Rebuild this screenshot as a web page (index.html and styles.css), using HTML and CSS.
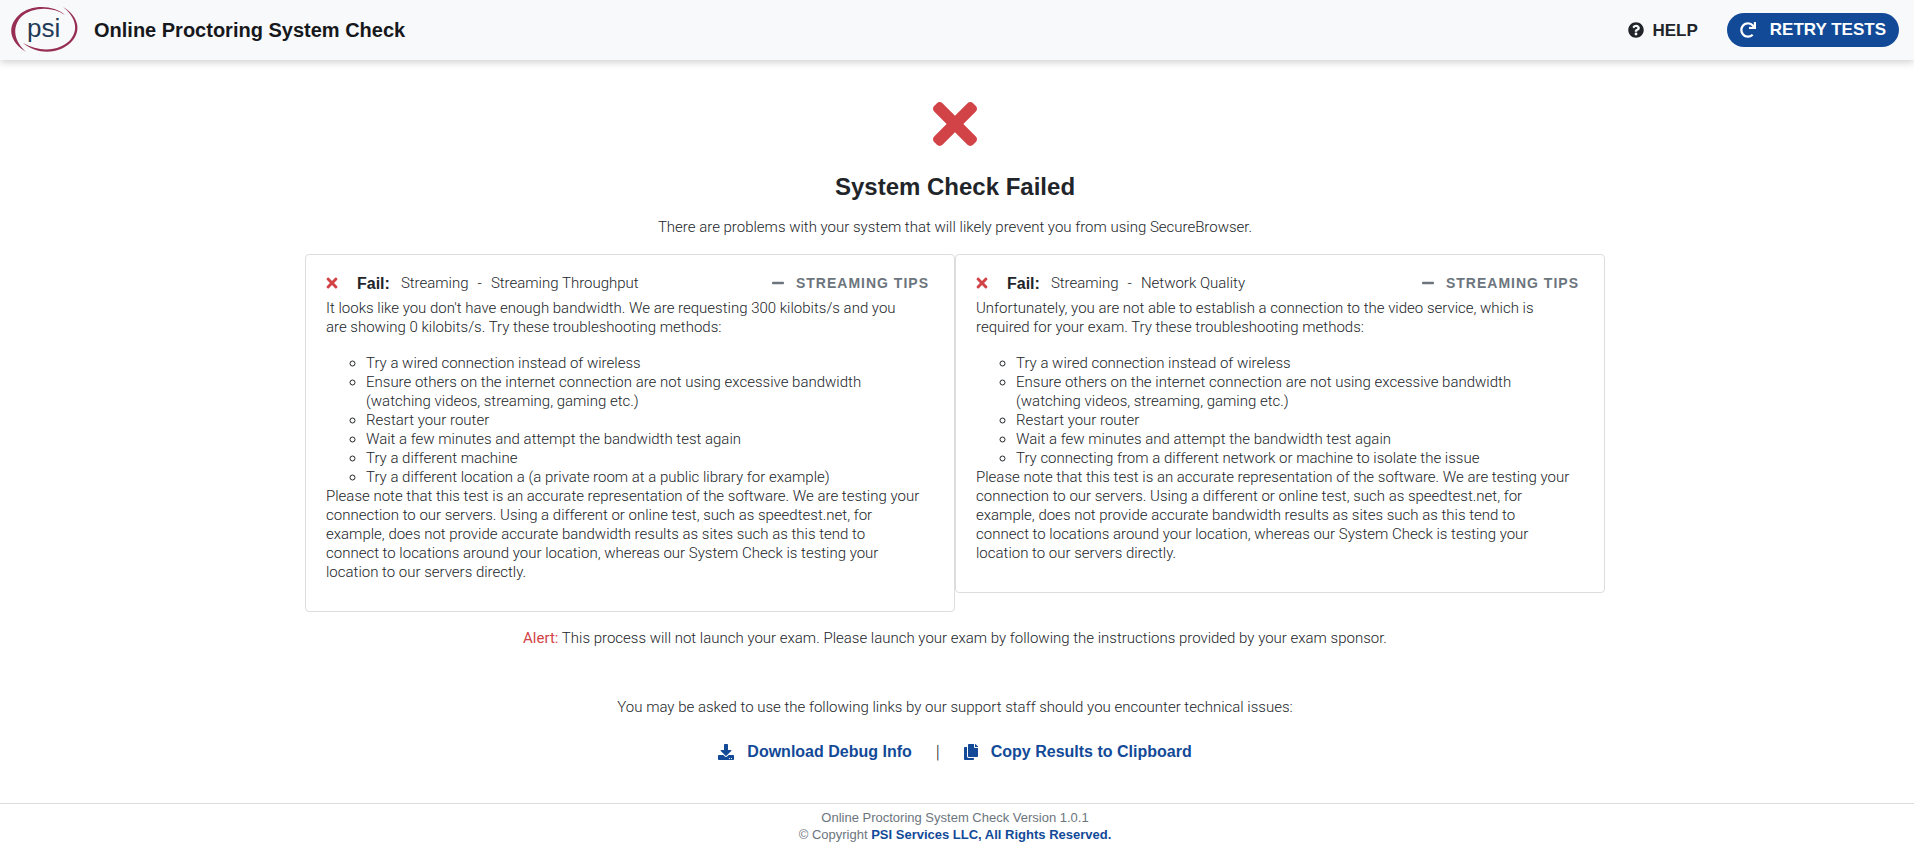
FILE: index.html
```html
<!DOCTYPE html>
<html lang="en">
<head>
<meta charset="utf-8">
<title>Online Proctoring System Check</title>
<link rel="stylesheet" href="styles.css">
</head>
<body>
<svg class="sprite" aria-hidden="true">
  <symbol id="times" viewBox="0 0 352 512"><path d="M242.720 256l100.070-100.070c12.280-12.280 12.280-32.190 0-44.480l-22.240-22.240c-12.280-12.280-32.190-12.280-44.480 0L176 189.280 75.930 89.210c-12.280-12.280-32.190-12.280-44.480 0L9.210 111.450c-12.280 12.280-12.280 32.190 0 44.480L109.280 256 9.210 356.070c-12.280 12.280-12.280 32.190 0 44.480l22.240 22.240c12.280 12.280 32.200 12.280 44.480 0L176 322.720l100.070 100.070c12.280 12.280 32.200 12.280 44.480 0l22.240-22.240c12.280-12.280 12.280-32.190 0-44.480L242.720 256z"/></symbol>
  <symbol id="minus" viewBox="0 0 448 512"><path d="M416 208H32c-17.670 0-32 14.330-32 32v32c0 17.670 14.330 32 32 32h384c17.670 0 32-14.330 32-32v-32c0-17.670-14.330-32-32-32z"/></symbol>
</svg>

<header class="topbar">
  <svg class="logo" viewBox="0 0 68 46" role="img" aria-label="psi">
    <path class="logo-ring" d="M54 8C43-2 20-3 8 8C-5 20-1 35 15 45C4 35 0 21 10 10C21 0 41-1 54 8Z"/>
    <path class="logo-ring" d="M52 0C66 8 71 22 62 33C51 47 27 49 12 36C29 46 50 44 60 32C68 22 64 9 52 0Z"/>
    <text class="logo-text" x="16" y="30">psi</text>
  </svg>
  <h1 class="title">Online Proctoring System Check</h1>
  <a class="help" href="#help">
    <svg class="icon" viewBox="0 0 512 512" aria-hidden="true"><path d="M504 256c0 136.997-111.043 248-248 248S8 392.997 8 256C8 119.083 119.043 8 256 8s248 111.083 248 248zM262.655 90c-54.497 0-89.255 22.957-116.549 63.758-3.536 5.286-2.353 12.415 2.715 16.258l34.699 26.310c5.205 3.947 12.621 3.008 16.665-2.122 17.864-22.658 30.113-35.797 57.303-35.797 20.429 0 45.698 13.148 45.698 32.958 0 14.976-12.363 22.667-32.534 33.976C247.128 238.528 216 254.941 216 296v4c0 6.627 5.373 12 12 12h56c6.627 0 12-5.373 12-12v-1.333c0-28.462 83.186-29.647 83.186-106.667 0-58.002-60.165-102-116.531-102zM256 338c-25.365 0-46 20.635-46 46 0 25.364 20.635 46 46 46s46-20.636 46-46c0-25.365-20.635-46-46-46z"/></svg>
    HELP
  </a>
  <button class="retry" type="button">
    <svg class="icon" viewBox="0 0 512 512" aria-hidden="true"><path d="M500.330 0h-47.410a12 12 0 0 0-12 12.570l4 82.760A247.420 247.420 0 0 0 256 8C119.340 8 7.900 119.530 8 256.190 8.100 393.070 119.100 504 256 504a247.100 247.100 0 0 0 166.180-63.910 12 12 0 0 0 .48-17.430l-34-34a12 12 0 0 0-16.380-.55A176 176 0 1 1 402.100 157.800l-101.530-4.870a12 12 0 0 0-12.570 12v47.410a12 12 0 0 0 12 12h200.330a12 12 0 0 0 12-12V12a12 12 0 0 0-12-12z"/></svg>
    RETRY TESTS
  </button>
</header>

<main class="main">
  <svg class="result-icon" aria-hidden="true"><use href="#times"/></svg>
  <h2 class="result">System Check Failed</h2>
  <p class="summary">There are problems with your system that will likely prevent you from using SecureBrowser.</p>

  <div class="cards">
    <section class="card">
      <div class="card-head">
        <svg class="fail-icon" aria-hidden="true"><use href="#times"/></svg>
        <strong class="fail">Fail:</strong>
        <span>Streaming</span><span>-</span><span>Streaming Throughput</span>
        <button class="tips" type="button"><svg class="tips-icon" aria-hidden="true"><use href="#minus"/></svg>STREAMING TIPS</button>
      </div>
      <p class="text">It looks like you don't have enough bandwidth. We are requesting 300 kilobits/s and you<br> are showing 0 kilobits/s. Try these troubleshooting methods:</p>
      <ul class="list">
        <li>Try a wired connection instead of wireless</li>
        <li>Ensure others on the internet connection are not using excessive bandwidth<br> (watching videos, streaming, gaming etc.)</li>
        <li>Restart your router</li>
        <li>Wait a few minutes and attempt the bandwidth test again</li>
        <li>Try a different machine</li>
        <li>Try a different location a (a private room at a public library for example)</li>
      </ul>
      <p class="text">Please note that this test is an accurate representation of the software. We are testing your connection to our servers. Using a different or online test, such as speedtest.net, for example, does not provide accurate bandwidth results as sites such as this tend to<br> connect to locations around your location, whereas our System Check is testing your<br> location to our servers directly.</p>
    </section>
    <section class="card">
      <div class="card-head">
        <svg class="fail-icon" aria-hidden="true"><use href="#times"/></svg>
        <strong class="fail">Fail:</strong>
        <span>Streaming</span><span>-</span><span>Network Quality</span>
        <button class="tips" type="button"><svg class="tips-icon" aria-hidden="true"><use href="#minus"/></svg>STREAMING TIPS</button>
      </div>
      <p class="text">Unfortunately, you are not able to establish a connection to the video service, which is required for your exam. Try these troubleshooting methods:</p>
      <ul class="list">
        <li>Try a wired connection instead of wireless</li>
        <li>Ensure others on the internet connection are not using excessive bandwidth<br> (watching videos, streaming, gaming etc.)</li>
        <li>Restart your router</li>
        <li>Wait a few minutes and attempt the bandwidth test again</li>
        <li>Try connecting from a different network or machine to isolate the issue</li>
      </ul>
      <p class="text">Please note that this test is an accurate representation of the software. We are testing your connection to our servers. Using a different or online test, such as speedtest.net, for example, does not provide accurate bandwidth results as sites such as this tend to<br> connect to locations around your location, whereas our System Check is testing your<br> location to our servers directly.</p>
    </section>
  </div>

  <p class="alert"><span class="alert-label">Alert:</span> This process will not launch your exam. Please launch your exam by following the instructions provided by your exam sponsor.</p>
  <p class="support">You may be asked to use the following links by our support staff should you encounter technical issues:</p>
  <div class="links">
    <a class="link" href="#download">
      <svg class="icon" viewBox="0 0 512 512" aria-hidden="true"><path d="M216 0h80c13.300 0 24 10.700 24 24v168h87.700c17.800 0 26.700 21.500 14.100 34.100L269.700 378.300c-7.500 7.500-19.800 7.500-27.300 0L90.100 226.100c-12.600-12.600-3.700-34.100 14.100-34.100H192V24c0-13.300 10.700-24 24-24zm296 376v112c0 13.300-10.700 24-24 24H24c-13.300 0-24-10.700-24-24V376c0-13.300 10.700-24 24-24h146.700l49 49c20.100 20.100 52.500 20.100 72.600 0l49-49H488c13.300 0 24 10.700 24 24zm-124 88c0-11-9-20-20-20s-20 9-20 20 9 20 20 20 20-9 20-20zm64 0c0-11-9-20-20-20s-20 9-20 20 9 20 20 20 20-9 20-20z"/></svg>
      Download Debug Info
    </a>
    <span class="divider">|</span>
    <a class="link" href="#copy">
      <svg class="icon icon-copy" viewBox="0 0 448 512" aria-hidden="true"><path d="M320 448v40c0 13.255-10.745 24-24 24H24c-13.255 0-24-10.745-24-24V120c0-13.255 10.745-24 24-24h72v296c0 30.879 25.121 56 56 56h168zm0-344V0H152c-13.255 0-24 10.745-24 24v368c0 13.255 10.745 24 24 24h272c13.255 0 24-10.745 24-24V128H344c-13.200 0-24-10.800-24-24zm120.971-31.029L375.029 7.029A24 24 0 0 0 358.059 0H352v96h96v-6.059a24 24 0 0 0-7.029-16.970z"/></svg>
      Copy Results to Clipboard
    </a>
  </div>
</main>

<footer class="footer">
  <div>Online Proctoring System Check Version 1.0.1</div>
  <div>© Copyright <a class="footer-link" href="#psi">PSI Services LLC, All Rights Reserved.</a></div>
</footer>
</body>
</html>
```
FILE: styles.css
```css
* { box-sizing: border-box; }
body {
  margin: 0;
  min-height: 100vh;
  display: flex;
  flex-direction: column;
  background: #fff;
  color: #212529;
  font-family: "Liberation Sans", Arial, sans-serif;
  font-size: 16px;
  line-height: 19px;
}
h1, h2, p, ul { margin: 0; }
a { text-decoration: none; }
button { border: 0; cursor: pointer; font-family: "Liberation Sans", Arial, sans-serif; }
svg { fill: currentColor; flex: none; }
.sprite { position: absolute; width: 0; height: 0; }
.icon { width: 16px; height: 16px; }
.icon-copy { width: 14px; }

.topbar {
  display: flex;
  align-items: center;
  height: 60px;
  padding: 0 15px 0 11px;
  background: #f8f9fb;
  box-shadow: 0 2px 8px rgba(0, 0, 0, .2);
}
.logo { width: 68px; height: 46px; overflow: visible; }
.logo-ring { fill: #962f52; }
.logo-text { fill: #1f3a56; font-size: 26px; }
.title { margin: 0 auto 0 15px; font-size: 20px; color: #16181b; }
.help {
  display: flex;
  align-items: center;
  gap: 8px;
  margin-right: 29px;
  color: #212529;
  font-size: 17px;
  font-weight: 700;
}
.retry {
  display: flex;
  align-items: center;
  gap: 14px;
  height: 34px;
  padding: 0 13px;
  border-radius: 17px;
  background: #124a98;
  color: #fff;
  font-size: 17px;
  font-weight: 700;
}

.main {
  flex: 1;
  display: flex;
  flex-direction: column;
  align-items: center;
  padding: 32px 4px 0 0;
  font-family: Roboto, sans-serif;
  font-size: 15px;
  font-weight: 300;
}
.result-icon { width: 44px; height: 64px; color: #d24348; }
.result {
  margin-top: 16px;
  font-family: "Liberation Sans", Arial, sans-serif;
  font-size: 24px;
  line-height: 29px;
}
.summary { margin-top: 17px; }
.cards {
  display: flex;
  align-items: flex-start;
  width: 100%;
  max-width: 1300px;
  margin-top: 17px;
}
.card {
  flex: 1;
  padding: 18px 20px 29px;
  border: 1px solid #dcdddf;
  border-radius: 4px;
}
.card-head {
  display: flex;
  align-items: center;
  gap: 9px;
  height: 20px;
  margin-bottom: 6px;
}
.fail-icon { width: 12px; height: 16px; color: #d24348; }
.fail {
  margin: 0 2px 0 10px;
  font-family: "Liberation Sans", Arial, sans-serif;
  font-size: 16px;
  font-weight: 700;
}
.tips {
  display: flex;
  align-items: center;
  gap: 12px;
  margin-left: auto;
  padding: 0 5px;
  background: none;
  color: #6c757d;
  font-size: 14px;
  font-weight: 700;
  letter-spacing: 1px;
}
.tips-icon { width: 12px; height: 14px; }
.list {
  margin-top: 17px;
  padding-left: 40px;
  list-style: circle;
}
.alert { margin-top: 17px; }
.alert-label { color: #d24348; font-weight: 400; }
.support { margin-top: 50px; }
.links {
  display: flex;
  align-items: center;
  margin: 25px 0 38px;
  font-size: 16px;
}
.link {
  display: flex;
  align-items: center;
  gap: 13px;
  color: #124a98;
  font-family: "Liberation Sans", Arial, sans-serif;
  font-weight: 700;
}
.divider { margin: 0 24px; font-size: 18px; }

.footer {
  padding: 5px 4px 7px 0;
  border-top: 1px solid #dcdddf;
  color: #6c757d;
  font-size: 13px;
  line-height: 17px;
  text-align: center;
}
.footer-link { color: #124a98; font-weight: 700; }
```
